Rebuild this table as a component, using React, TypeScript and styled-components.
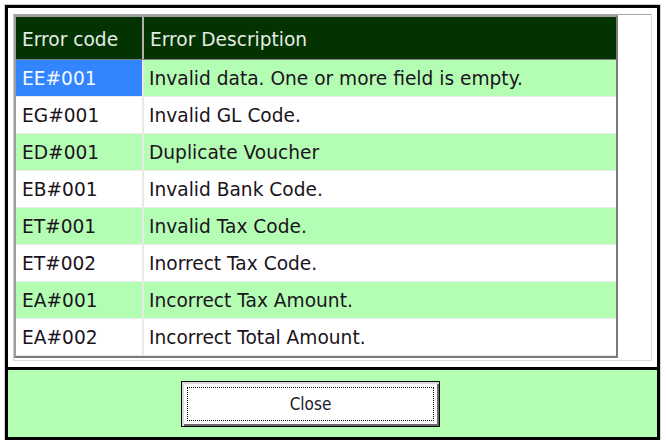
import React from 'react';
import styled, { createGlobalStyle } from 'styled-components';

type ErrorRow = {
	code: string;
	description: string;
};

const rows: ErrorRow[] = [
	{ code: 'EE#001', description: 'Invalid data. One or more field is empty.' },
	{ code: 'EG#001', description: 'Invalid GL Code.' },
	{ code: 'ED#001', description: 'Duplicate Voucher' },
	{ code: 'EB#001', description: 'Invalid Bank Code.' },
	{ code: 'ET#001', description: 'Invalid Tax Code.' },
	{ code: 'ET#002', description: 'Inorrect Tax Code.' },
	{ code: 'EA#001', description: 'Incorrect Tax Amount.' },
	{ code: 'EA#002', description: 'Incorrect Total Amount.' },
];

const selectedIndex = 0;

export default function App() {
	return (
		<>
			<GlobalStyle />
			<Frame>
				<TopPanel>
					<ListBox>
						<Grid>
							<HeaderRow>
								<HeaderCell first>Error code</HeaderCell>
								<HeaderCell>Error Description</HeaderCell>
							</HeaderRow>
							{rows.map((row, i) => (
								<Row key={i} alt={i % 2 === 0}>
									<CodeCell selected={i === selectedIndex}>{row.code}</CodeCell>
									<DescCell>{row.description}</DescCell>
								</Row>
							))}
						</Grid>
					</ListBox>
				</TopPanel>
				<BottomPanel>
					<CloseButton>Close</CloseButton>
				</BottomPanel>
			</Frame>
		</>
	);
}

const GlobalStyle = createGlobalStyle`
	html, body {
		margin: 0;
		padding: 0;
		background: #ffffff;
		font-family: "DejaVu Sans", Verdana, sans-serif;
	}
`;

const Frame = styled.div`
	margin: 5px 0 0 5px;
	width: 649px;
	height: 429px;
	border: 3px solid #000;
	box-shadow: 0 0 0 1px #d0d0d0;
	display: flex;
	flex-direction: column;
	background: #fff;
`;

const TopPanel = styled.div`
	height: 359px;
	padding: 6px 0 0 5px;
	box-sizing: border-box;
`;

const ListBox = styled.div`
	width: 639px;
	height: 347px;
	box-sizing: border-box;
	border: 1px solid #dcdcdc;
	border-top-color: #a8a8a8;
	border-left-color: #c8c8c8;
`;

const Grid = styled.div`
	width: 604px;
	height: 343px;
	box-sizing: border-box;
	border: 2px solid #7a7a7a;
	border-top-color: #a0a0a0;
	border-left-color: #a0a0a0;
	display: flex;
	flex-direction: column;
	font-size: 18.6px;
`;

const HeaderRow = styled.div`
	display: grid;
	grid-template-columns: 128px 1fr;
	height: 43px;
	background: #023300;
	border-bottom: 1px solid #7f7f7f;
	box-sizing: border-box;
`;

const HeaderCell = styled.div<{ first?: boolean }>`
	display: flex;
	align-items: center;
	padding: 2px 0 0 6px;
	color: #e4ece4;
	border-right: ${(p) => (p.first ? '2px solid #b0b0b0' : 'none')};
`;

const Row = styled.div<{ alt: boolean }>`
	display: grid;
	grid-template-columns: 128px 1fr;
	height: 37px;
	background: ${(p) => (p.alt ? '#b4feb4' : '#ffffff')};
	border-bottom: 1px solid #eaeaea;
	box-sizing: border-box;
	color: #1b1420;
`;

const CodeCell = styled.div<{ selected: boolean }>`
	display: flex;
	align-items: center;
	padding-left: 6px;
	border-right: 2px solid #e8e8e8;
	background: ${(p) => (p.selected ? '#3385ff' : 'transparent')};
	color: ${(p) => (p.selected ? '#f4f8ff' : 'inherit')};
`;

const DescCell = styled.div`
	display: flex;
	align-items: center;
	padding-left: 5px;
	white-space: nowrap;
`;

const BottomPanel = styled.div`
	flex: 1;
	background: #b4feb4;
	border-top: 3px solid #000;
	display: flex;
	align-items: flex-start;
	padding: 11px 0 0 173px;
`;

const CloseButton = styled.button`
	position: relative;
	width: 259px;
	height: 46px;
	border: 1px solid #000;
	background: #fff;
	box-shadow: inset 2px 2px 0 #dcdcdc, inset -2px -2px 0 #6a6a6a;
	font-family: "DejaVu Sans Condensed", "DejaVu Sans", Verdana, sans-serif;
	font-size: 17px;
	color: #1a1a2a;
	padding: 0;

	&::after {
		content: '';
		position: absolute;
		inset: 5px;
		border: 1px dotted #000;
	}
`;
